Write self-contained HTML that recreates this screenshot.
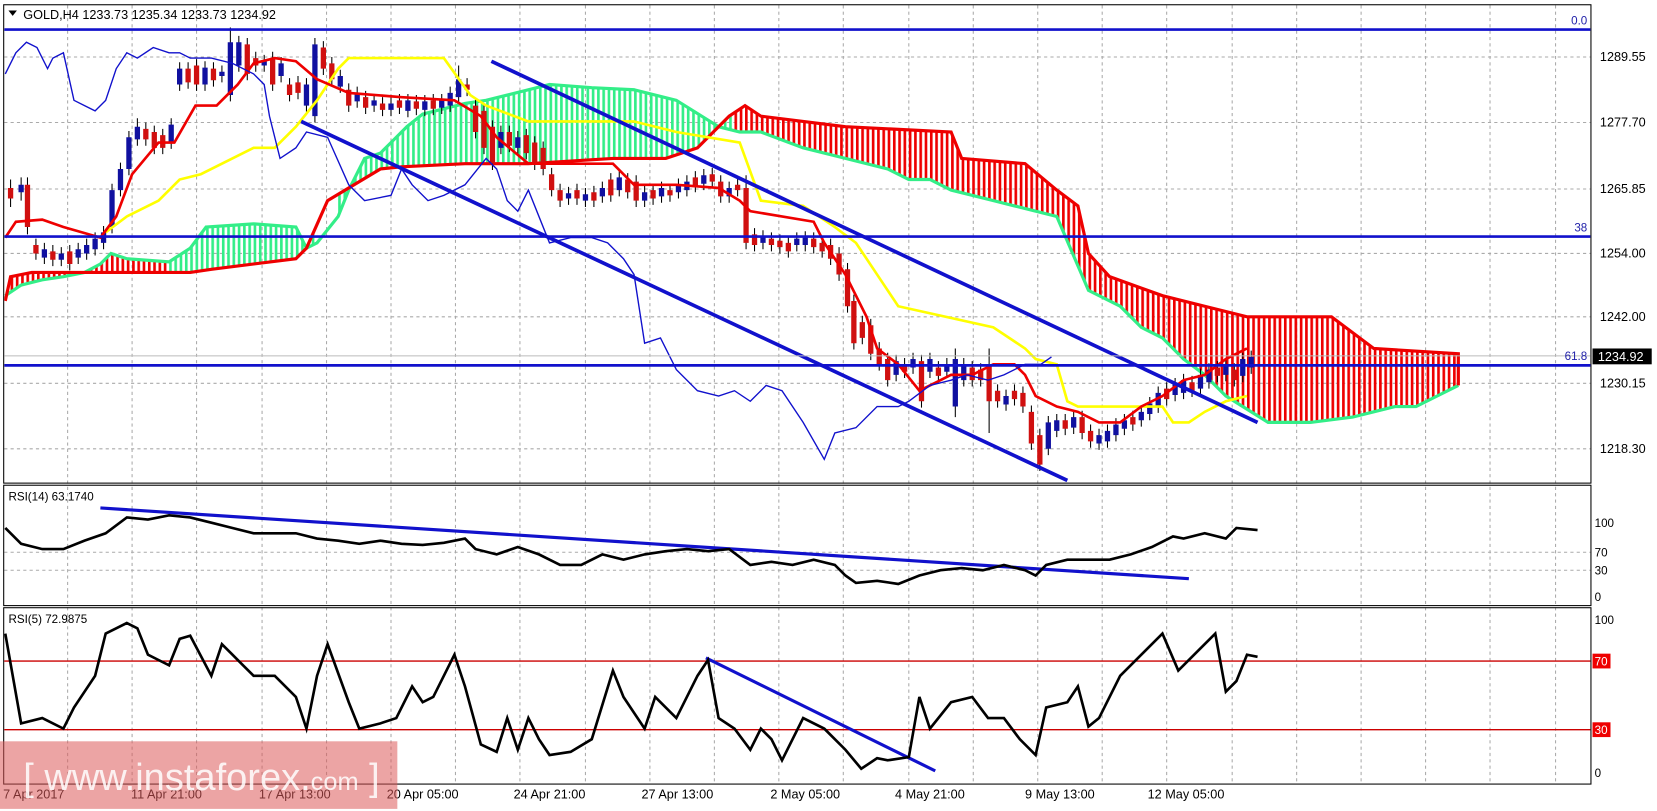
<!DOCTYPE html>
<html><head><meta charset="utf-8"><style>
html,body{margin:0;padding:0;background:#fff;width:1657px;height:811px;overflow:hidden}
svg{display:block}
text{font-family:"Liberation Sans","DejaVu Sans",sans-serif}
</style></head><body>
<svg width="1657" height="811" viewBox="0 0 1568 768" preserveAspectRatio="none" xmlns="http://www.w3.org/2000/svg">
<defs>
<pattern id="hr" width="5" height="10" patternUnits="userSpaceOnUse"><rect x="0" y="0" width="2.5" height="10" fill="#e00"/></pattern>
<pattern id="hg" width="5" height="10" patternUnits="userSpaceOnUse"><rect x="0" y="0" width="2.5" height="10" fill="#3e8"/></pattern>
<clipPath id="cg"><rect x="160" y="0" width="140" height="460"/><rect x="318" y="0" width="376" height="460"/></clipPath>
<clipPath id="cr"><rect x="0" y="0" width="160" height="460"/><rect x="694" y="0" width="800" height="460"/></clipPath>
<clipPath id="main"><rect x="4" y="5" width="1501" height="452"/></clipPath>
</defs>
<rect width="1568" height="768" fill="#fff"/>
<path stroke="#aaa" stroke-dasharray="3,3" stroke-width="1" fill="none" d="M64 5V742M125 5V742M186 5V742M248 5V742M309 5V742M370 5V742M431 5V742M492 5V742M554 5V742M615 5V742M676 5V742M737 5V742M798 5V742M860 5V742M921 5V742M982 5V742M1043 5V742M1104 5V742M1166 5V742M1227 5V742M1288 5V742M1349 5V742M1410 5V742M1472 5V742M4 54H1505M4 116H1505M4 179H1505M4 240H1505M4 300H1505M4 363H1505M4 425H1505M4 523H1505M4 540H1505"/>
<rect x="3.5" y="4.5" width="1502" height="453" fill="none" stroke="#000"/>
<rect x="3.5" y="459.5" width="1502" height="114" fill="none" stroke="#000"/>
<rect x="3.5" y="575.5" width="1502" height="167" fill="none" stroke="#000"/>
<g clip-path="url(#main)">
<polygon fill="url(#hr)" clip-path="url(#cr)" points="5,280 20,270 40,265 60,262 80,258 95,250 105,240 120,245 160,248 180,235 195,215 240,212 280,215 290,235 300,230 320,205 330,180 345,150 360,145 370,135 385,120 400,108 440,98 460,95 480,90 520,80 560,83 600,85 640,95 680,120 700,125 720,125 760,140 800,150 840,160 860,170 880,170 900,180 940,190 960,195 1000,205 1030,275 1060,290 1080,310 1100,320 1120,340 1140,355 1160,375 1200,400 1240,400 1280,395 1300,390 1320,385 1340,385 1360,375 1380,365 1380,335 1300,330 1260,300 1180,300 1140,290 1100,280 1050,262 1030,240 1020,195 1000,180 970,155 910,150 900,125 800,120 720,110 705,100 690,110 660,140 630,150 580,150 500,155 440,155 380,158 360,160 310,190 290,235 280,245 200,255 180,258 100,258 60,258 30,258 10,262 5,285"/>
<polygon fill="url(#hg)" clip-path="url(#cg)" points="5,280 20,270 40,265 60,262 80,258 95,250 105,240 120,245 160,248 180,235 195,215 240,212 280,215 290,235 300,230 320,205 330,180 345,150 360,145 370,135 385,120 400,108 440,98 460,95 480,90 520,80 560,83 600,85 640,95 680,120 700,125 720,125 760,140 800,150 840,160 860,170 880,170 900,180 940,190 960,195 1000,205 1030,275 1060,290 1080,310 1100,320 1120,340 1140,355 1160,375 1200,400 1240,400 1280,395 1300,390 1320,385 1340,385 1360,375 1380,365 1380,335 1300,330 1260,300 1180,300 1140,290 1100,280 1050,262 1030,240 1020,195 1000,180 970,155 910,150 900,125 800,120 720,110 705,100 690,110 660,140 630,150 580,150 500,155 440,155 380,158 360,160 310,190 290,235 280,245 200,255 180,258 100,258 60,258 30,258 10,262 5,285"/>
<polyline fill="none" stroke="#3e8" stroke-width="3" points="5,280 20,270 40,265 60,262 80,258 95,250 105,240 120,245 160,248 180,235 195,215 240,212 280,215 290,235 300,230 320,205 330,180 345,150 360,145 370,135 385,120 400,108 440,98 460,95 480,90 520,80 560,83 600,85 640,95 680,120 700,125 720,125 760,140 800,150 840,160 860,170 880,170 900,180 940,190 960,195 1000,205 1030,275 1060,290 1080,310 1100,320 1120,340 1140,355 1160,375 1200,400 1240,400 1280,395 1300,390 1320,385 1340,385 1360,375 1380,365"/>
<polyline fill="none" stroke="#e00" stroke-width="3" points="5,285 10,262 30,258 60,258 100,258 180,258 200,255 280,245 290,235 310,190 360,160 380,158 440,155 500,155 580,150 630,150 660,140 690,110 705,100 720,110 800,120 900,125 910,150 970,155 1000,180 1020,195 1030,240 1050,262 1100,280 1140,290 1180,300 1260,300 1300,330 1380,335 1380,365"/>
<path stroke="#000" stroke-width="1" fill="none" d="M10 170V196M20 168V190M26 168V222M34 226V246M42 230V250M50 232V252M58 234V252M66 232V256M74 230V250M82 226V246M90 220V242M98 214V236M106 174V221M114 154V186M122 124V166M130 112V138M138 116V138M146 119V146M154 122V146M162 112V141M170 59V86M178 59V84M186 56V86M194 58V86M202 59V82M210 62V78M218 26V96M226 34V68M234 36V76M242 49V68M250 52V68M258 49V86M266 54V78M274 74V96M282 72V94M290 74V106M298 36V116M306 39V71M314 54V81M322 66V88M330 79V106M338 82V102M346 86V108M354 89V106M362 92V110M370 92V110M378 89V108M386 89V111M394 90V109M402 90V110M410 89V109M418 89V108M426 82V106M434 62V98M442 74V91M450 94V131M458 99V146M466 114V161M474 119V146M482 119V144M490 124V146M498 122V151M506 129V161M514 134V166M522 159V186M530 174V196M538 177V194M546 174V194M554 178V196M562 176V196M570 172V192M578 164V191M586 162V186M594 164V188M602 166V196M610 176V196M618 174V194M626 172V192M634 174V191M642 169V188M650 166V186M658 162V182M666 160V180M674 159V178M682 166V192M690 172V192M698 169V186M706 166V236M714 216V238M722 218V236M730 220V238M738 222V240M746 224V244M754 220V238M762 219V238M770 220V240M778 224V244M786 226V251M794 234V266M802 249V296M808 279V331M816 299V326M824 302V341M832 324V351M840 334V366M848 336V361M856 339V358M864 334V354M872 336V386M880 334V358M888 342V362M896 339V358M904 330V395M912 339V366M920 342V366M928 344V366M936 330V410M944 364V386M952 369V389M960 364V384M968 366V391M976 384V426M984 406V446M992 394V431M1000 392V414M1008 392V412M1016 389V411M1024 389V416M1032 402V424M1040 406V426M1048 402V424M1056 396V418M1064 392V412M1072 389V408M1080 384V404M1088 376V398M1096 366V391M1104 362V384M1112 358V380M1120 354V378M1128 356V376M1136 349V374M1144 344V368M1152 342V362M1160 339V361M1168 344V366M1176 334V362M1184 332V354"/>
<path stroke="#d01010" stroke-width="5" fill="none" d="M10 178V188M26 175V215M34 232V240M50 238V246M66 238V250M138 122V132M146 125V140M154 128V140M178 65V78M186 62V80M202 65V76M234 42V70M242 55V62M258 55V80M274 80V90M282 78V88M306 45V65M314 60V75M330 85V100M346 92V102M362 98V104M378 95V102M394 96V103M410 95V103M442 80V85M450 100V125M458 105V140M466 120V155M482 125V138M498 128V145M506 135V155M514 140V160M522 165V180M530 180V190M546 180V188M562 182V190M578 170V185M594 170V182M602 172V190M618 180V188M634 180V185M658 168V176M674 165V172M682 172V186M698 175V180M706 178V230M714 222V232M730 226V232M738 228V234M746 230V238M770 226V234M778 230V238M786 232V245M794 240V260M802 255V290M808 285V325M816 305V320M824 308V335M832 330V345M840 340V360M856 345V352M872 342V380M888 348V356M920 348V360M928 350V360M936 345V380M944 370V380M960 370V378M968 372V385M976 390V420M984 412V440M1008 398V406M1024 395V410M1032 408V418M1072 395V402M1104 368V378M1128 362V370M1152 348V356M1168 350V360"/>
<path stroke="#1010a0" stroke-width="5" fill="none" d="M20 175V182M42 236V244M58 240V246M74 236V244M82 232V240M90 226V236M98 220V230M106 180V215M114 160V180M122 130V160M130 120V132M162 118V135M170 65V80M194 64V80M210 68V72M218 40V90M226 40V62M250 58V62M266 60V72M290 80V100M298 42V110M322 72V82M338 88V96M354 95V100M370 98V104M386 95V105M402 96V104M418 95V102M426 88V100M434 75V92M474 125V140M490 130V140M538 183V188M554 184V190M570 178V186M586 168V180M610 182V190M626 178V186M642 175V182M650 172V180M666 166V174M690 178V186M722 224V230M754 226V232M762 225V232M848 342V355M864 340V348M880 340V352M896 345V352M904 340V385M912 345V360M952 375V383M992 400V425M1000 398V408M1016 395V405M1040 412V420M1048 408V418M1056 402V412M1064 398V406M1080 390V398M1088 382V392M1096 372V385M1112 364V374M1120 360V372M1136 355V368M1144 350V362M1160 345V355M1176 340V356M1184 338V348"/>
<polyline fill="none" stroke="#ff0" stroke-width="2.5" points="100,220 120,205 150,190 170,170 190,165 240,140 260,140 280,120 300,95 320,65 330,55 420,55 445,90 460,100 500,115 600,115 640,125 700,135 720,190 760,195 790,215 810,230 830,260 850,290 940,310 970,330 980,340 1000,345 1010,380 1020,385 1100,385 1110,400 1125,400 1140,390 1160,380 1180,375"/>
<polyline fill="none" stroke="#e00" stroke-width="2.5" points="5,225 15,210 40,208 60,215 95,225 110,205 125,165 150,135 165,135 185,100 205,100 225,80 240,60 260,55 280,58 300,75 330,88 380,92 430,95 455,110 470,130 500,155 530,155 580,155 600,175 640,175 680,178 700,190 710,200 770,210 780,230 800,260 820,300 830,330 850,345 870,370 900,355 920,355 940,345 960,345 970,355 980,375 1000,385 1020,390 1040,400 1060,400 1080,385 1100,375 1120,360 1140,355 1160,340 1180,330"/>
<polyline fill="none" stroke="#11c" stroke-width="1.3" points="5,70 15,50 25,40 35,45 45,65 50,55 60,50 70,95 80,100 90,105 100,95 110,65 120,50 130,55 145,45 160,50 170,50 180,55 200,55 220,60 240,70 250,80 255,110 265,150 280,140 290,125 310,130 330,175 345,190 370,185 380,160 390,175 405,190 420,185 440,175 460,150 470,160 480,190 490,200 500,180 520,230 540,225 560,225 575,230 590,245 600,260 610,325 625,320 640,350 660,370 680,375 695,370 710,380 725,365 740,370 760,400 780,435 790,410 810,405 830,385 850,385 860,380 880,365 900,360 915,355 935,360 950,355 970,345 985,345 995,338"/>
<line x1="465" y1="58" x2="1190" y2="400" stroke="#11c" stroke-width="3.5"/>
<line x1="285" y1="115" x2="1010" y2="455" stroke="#11c" stroke-width="3.5"/>
<line x1="4" y1="337" x2="1505" y2="337" stroke="#bbb" stroke-width="1"/>
<line x1="4" y1="28" x2="1505" y2="28" stroke="#11c" stroke-width="2.5"/>
<line x1="4" y1="224" x2="1505" y2="224" stroke="#11c" stroke-width="2.5"/>
<line x1="4" y1="346" x2="1505" y2="346" stroke="#11c" stroke-width="2.5"/>
</g>
<text x="1502" y="23" font-size="11" fill="#22a" text-anchor="end">0.0</text>
<text x="1502" y="219" font-size="11" fill="#22a" text-anchor="end">38</text>
<text x="1502" y="341" font-size="11" fill="#22a" text-anchor="end">61.8</text>
<path d="M8,10 L16,10 L12,15 Z" fill="#000"/>
<text x="22" y="18" font-size="12" fill="#000">GOLD,H4  1233.73 1235.34 1233.73 1234.92</text>
<g font-size="12" fill="#000">
<text x="1514" y="58">1289.55</text><text x="1514" y="120">1277.70</text><text x="1514" y="183">1265.85</text><text x="1514" y="244">1254.00</text><text x="1514" y="304">1242.00</text><text x="1514" y="367">1230.15</text><text x="1514" y="429">1218.30</text>
</g>
<rect x="1507" y="330" width="56" height="15" fill="#000"/>
<text x="1512" y="342" font-size="12" fill="#fff">1234.92</text>
<text x="8" y="474" font-size="11" fill="#000">RSI(14) 63.1740</text>
<g font-size="11" fill="#000"><text x="1509" y="499">100</text><text x="1509" y="527">70</text><text x="1509" y="544">30</text><text x="1509" y="569">0</text></g>
<line x1="95" y1="481" x2="1125" y2="548" stroke="#11c" stroke-width="3"/>
<polyline fill="none" stroke="#000" stroke-width="2.5" points="5,500 20,515 40,520 60,520 80,512 100,505 120,490 140,492 160,488 180,490 200,495 220,500 240,505 260,505 280,505 300,510 320,512 340,515 360,512 380,515 400,516 420,514 440,510 450,520 470,525 490,518 510,525 530,535 550,535 570,525 590,530 610,525 630,522 650,520 670,522 690,520 710,535 730,532 750,535 770,530 790,535 800,545 810,552 830,550 850,553 870,545 890,540 910,538 930,540 950,535 970,540 980,545 990,535 1010,530 1030,530 1050,530 1070,525 1090,518 1110,508 1120,510 1140,505 1160,510 1170,500 1190,502"/>
<text x="8" y="590" font-size="11" fill="#000">RSI(5) 72.9875</text>
<line x1="4" y1="626" x2="1505" y2="626" stroke="#c00" stroke-width="1.3"/>
<line x1="4" y1="691" x2="1505" y2="691" stroke="#c00" stroke-width="1.3"/>
<g font-size="11" fill="#000"><text x="1509" y="591">100</text><text x="1509" y="736">0</text></g>
<rect x="1507" y="619" width="17" height="14" fill="#e00"/><text x="1509" y="630" font-size="11" fill="#fff">70</text>
<rect x="1507" y="684" width="17" height="14" fill="#e00"/><text x="1509" y="695" font-size="11" fill="#fff">30</text>
<line x1="668" y1="623" x2="885" y2="730" stroke="#11c" stroke-width="3"/>
<polyline fill="none" stroke="#000" stroke-width="2.5" points="5,600 20,685 40,680 60,690 70,670 90,640 100,600 110,595 120,590 130,595 140,620 150,625 160,630 170,605 180,602 200,640 210,610 220,620 230,630 240,640 260,640 280,660 290,690 300,640 310,610 330,665 340,690 360,685 375,680 390,650 400,665 410,660 420,640 430,620 440,650 455,705 470,712 480,680 490,710 500,680 510,700 520,715 540,712 560,700 580,635 590,660 610,690 620,660 640,680 660,640 670,625 680,680 695,690 710,710 720,690 730,700 740,720 760,680 780,690 800,710 815,728 830,718 840,720 860,717 870,660 880,690 900,665 920,660 935,680 950,680 965,700 980,715 990,670 1010,665 1020,650 1030,688 1040,680 1060,640 1080,620 1100,600 1115,635 1130,620 1150,600 1160,655 1170,645 1180,620 1190,622"/>
<g font-size="12" fill="#000">
<text x="3" y="756">7 Apr 2017</text><text x="124" y="756">11 Apr 21:00</text><text x="245" y="756">17 Apr 13:00</text><text x="366" y="756">20 Apr 05:00</text><text x="486" y="756">24 Apr 21:00</text><text x="607" y="756">27 Apr 13:00</text><text x="729" y="756">2 May 05:00</text><text x="847" y="756">4 May 21:00</text><text x="970" y="756">9 May 13:00</text><text x="1086" y="756">12 May 05:00</text>
</g>
<rect x="0" y="702" width="376" height="64" fill="rgba(220,90,90,0.55)"/>
<text x="22" y="748" font-size="36" fill="rgba(255,255,255,0.85)">[ www.instaforex.<tspan font-size="24">com</tspan> ]</text>
</svg>
</body></html>
